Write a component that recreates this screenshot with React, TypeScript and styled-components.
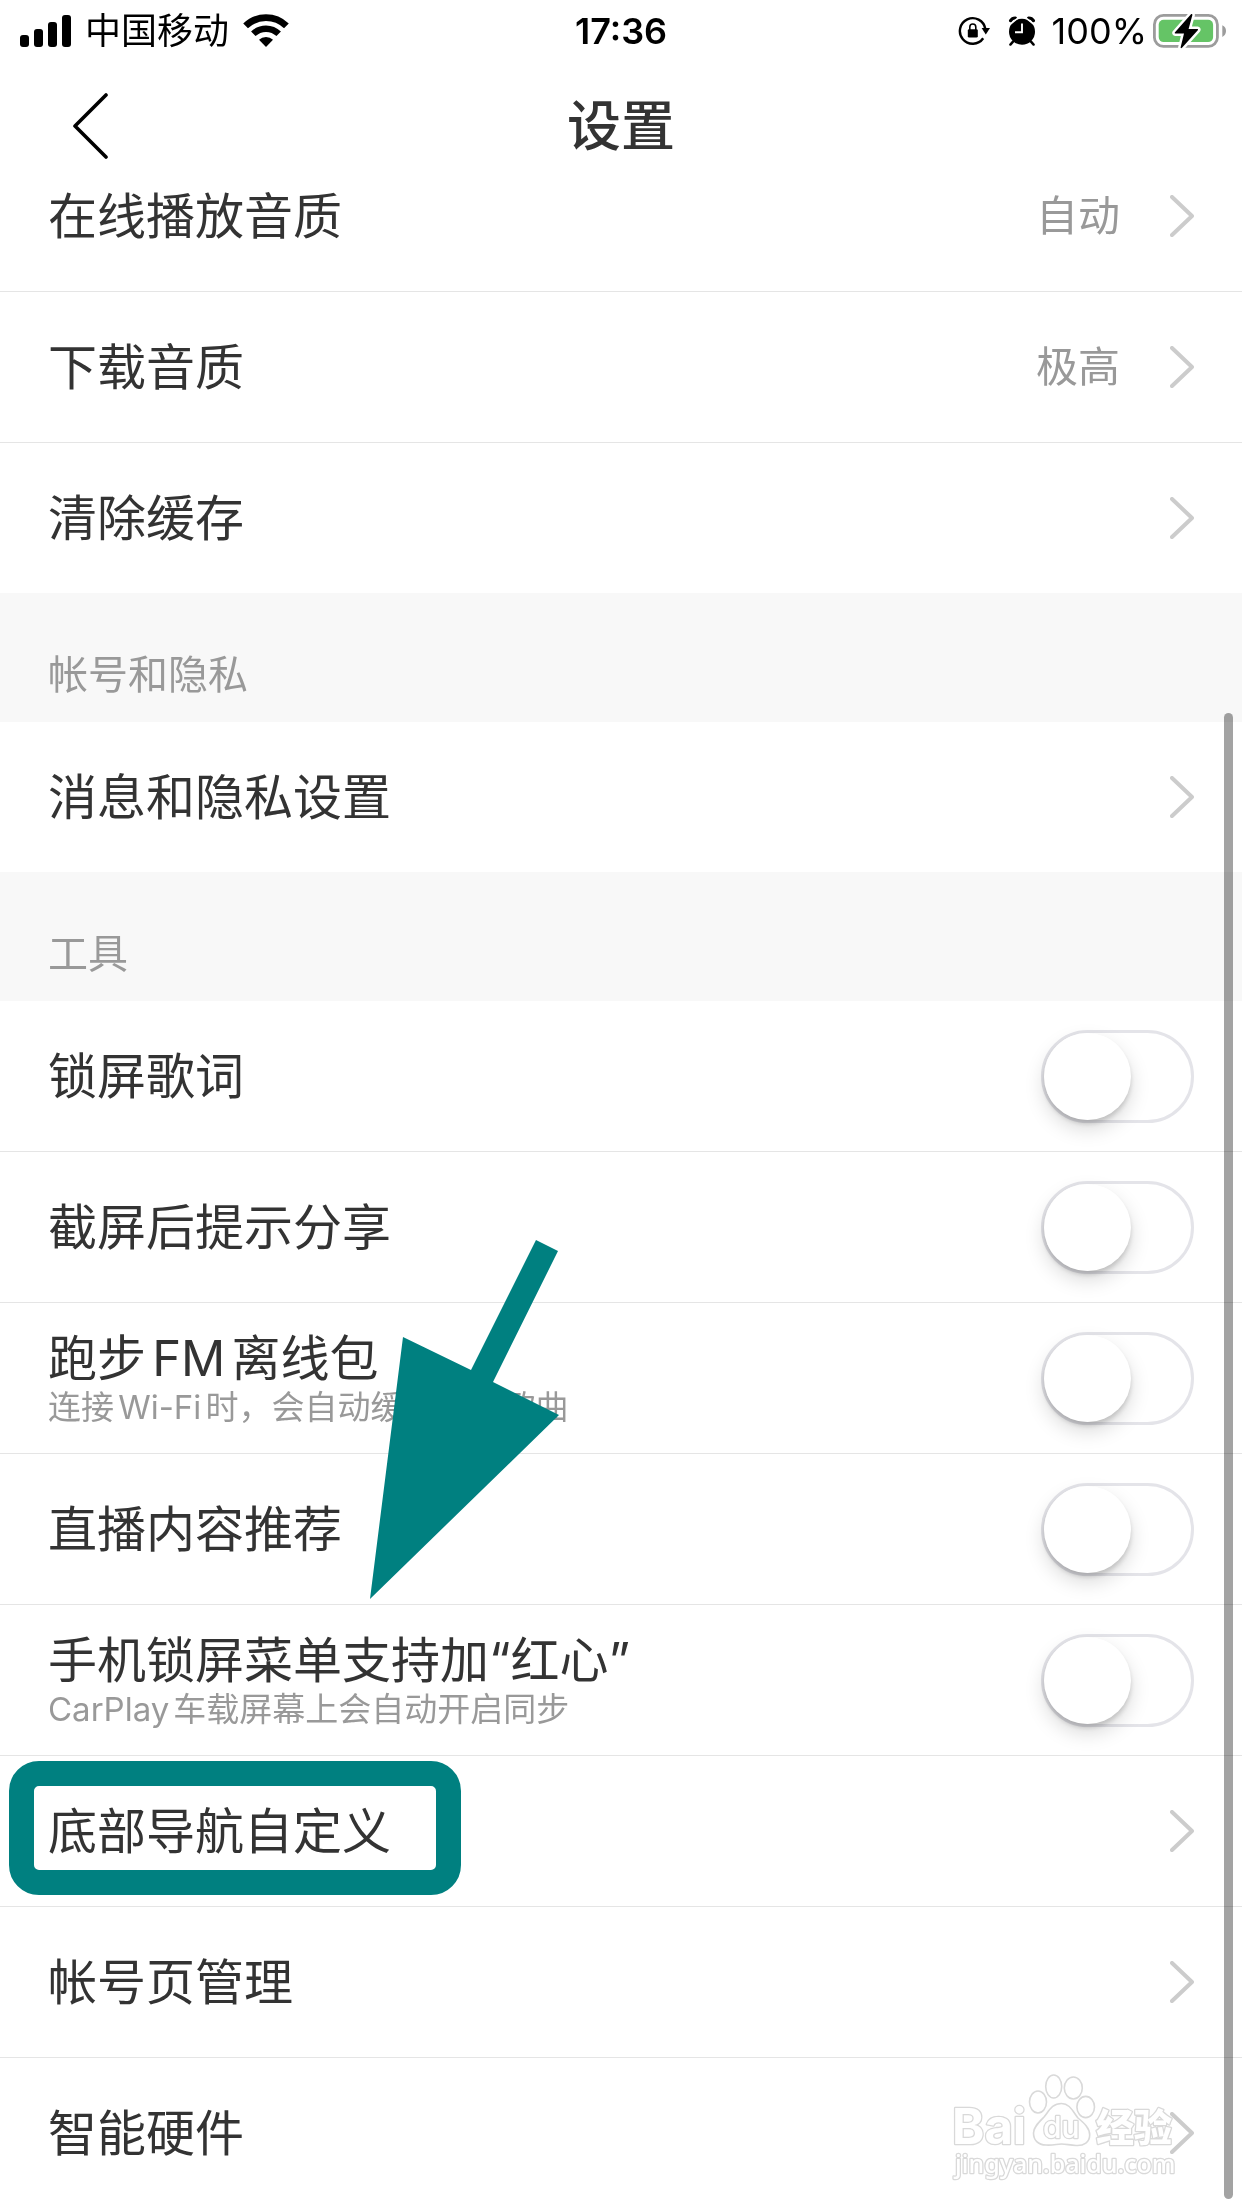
import React from "react";
import styled, { createGlobalStyle, css } from "styled-components";

const GlobalStyle = createGlobalStyle`
  *, *::before, *::after { box-sizing: border-box; }
  body {
    margin: 0;
    background: #fff;
    color: #333;
    font-family: Inter, "Noto Sans CJK SC", sans-serif;
    text-autospace: normal;
  }
  h1, h2 { margin: 0; font-weight: 400; }
  svg { display: block; flex: none; }
`;

const Page = styled.div`
  position: relative;
  overflow-x: clip;
`;

const Header = styled.header`
  position: sticky;
  top: 0;
  z-index: 3;
  background: #fff;
`;

const StatusBar = styled.div`
  display: grid;
  grid-template-columns: 1fr auto 1fr;
  align-items: center;
  height: 60px;
  padding: 0 16px;
  color: #000;
  font-size: 36px;
  line-height: 62px;
`;

const StatusGroup = styled.div<{ $end?: boolean }>`
  display: flex;
  align-items: center;
  justify-content: ${(p) => (p.$end ? "flex-end" : "flex-start")};
  padding-left: 4px;
`;

const Carrier = styled.span`
  margin: 0 14px;
`;

const Clock = styled.time`
  font-weight: 600;
`;

const Percent = styled.span`
  margin: 0 5px 0 16px;
`;

const AlarmSlot = styled.span`
  margin-left: 18px;
`;

const NavBar = styled.nav`
  display: grid;
  grid-template-columns: 1fr auto 1fr;
  align-items: center;
  height: 132px;
  padding: 0 72px;
`;

const BackButton = styled.button`
  justify-self: start;
  padding: 0;
  border: 0;
  background: none;
  color: #000;
  cursor: pointer;
`;

const Title = styled.h1`
  padding-top: 2px;
  font-size: 54px;
  font-weight: 500;
  line-height: 60px;
`;

/* The list is scrolled: its first row sits partly beneath the header. */
const Content = styled.main`
  margin-top: -51px;
`;

const SectionTitle = styled.h2`
  height: 129px;
  padding: 52px 48px 0;
  background: #f8f8f8;
  color: #999;
  font-size: 40px;
  line-height: 60px;
`;

const rowStyle = css`
  position: relative;
  display: flex;
  align-items: center;
  height: 151px;
  padding: 0 48px;
  border-bottom: 1px solid #e5e5e5;
  color: inherit;
  text-decoration: none;
  cursor: pointer;

  &:last-child {
    height: 150px;
    border-bottom: 0;
  }
`;

const LinkRow = styled.a`
  ${rowStyle}
`;

const ToggleRow = styled.label`
  ${rowStyle}
`;

const Texts = styled.span`
  display: flex;
  flex-direction: column;
  flex: 1;
  padding-top: 2px;
`;

const Label = styled.span`
  font-size: 49px;
  line-height: 56px;
`;

const Hint = styled.span`
  color: #999;
  font-size: 33px;
  line-height: 40px;
`;

const Value = styled.span`
  margin-right: 50px;
  color: #999;
  font-size: 42px;
  line-height: 56px;
`;

const Switch = styled.input`
  appearance: none;
  flex: none;
  width: 153px;
  height: 93px;
  margin: 0;
  border: 3px solid #e4e4e9;
  border-radius: 47px;
  background: #fff;
  cursor: pointer;

  &::before {
    content: "";
    display: block;
    width: 87px;
    height: 87px;
    border-radius: 50%;
    background: #fff;
    box-shadow: 0 9px 20px rgba(0, 0, 0, 0.15), 0 4px 4px rgba(0, 0, 0, 0.14);
  }

  &:checked {
    border-color: #31c27c;
    background: #31c27c;
  }

  &:checked::before {
    margin-left: 60px;
  }
`;

const Marker = styled.span`
  position: absolute;
  top: 5px;
  left: 9px;
  width: 452px;
  height: 134px;
  border: 25px solid #008080;
  border-radius: 30px;
  pointer-events: none;
`;

const Pointer = styled.svg`
  position: absolute;
  z-index: 1;
  left: 370px;
  bottom: 306px;
  pointer-events: none;
`;

const ScrollThumb = styled.div`
  position: absolute;
  z-index: 2;
  top: 713px;
  right: 9px;
  bottom: 9px;
  width: 9px;
  border-radius: 5px;
  background: rgba(0, 0, 0, 0.36);
`;

const Watermark = styled.svg`
  position: absolute;
  right: 50px;
  bottom: 24px;
  mix-blend-mode: multiply;
  pointer-events: none;
`;

const SignalIcon = () => (
  <svg width="51" height="32" viewBox="0 0 51 32" aria-hidden="true">
    <rect x="0" y="20" width="9" height="12" rx="3" />
    <rect x="14" y="14" width="9" height="18" rx="3" />
    <rect x="28" y="7" width="9" height="25" rx="3" />
    <rect x="42" y="0" width="9" height="32" rx="3" />
  </svg>
);

const WifiIcon = () => (
  <svg width="46" height="34" viewBox="0 0 46 34" aria-hidden="true">
    <g fill="none" stroke="#000">
      <path d="M2.6 11.9A29.3 29.3 0 0 1 43.4 11.9" strokeWidth="6.8" />
      <path d="M10.3 19.8A18.3 18.3 0 0 1 35.7 19.8" strokeWidth="6.4" />
    </g>
    <path d="M16 25.8A10 10 0 0 1 30 25.8L23 33Z" />
  </svg>
);

const RotationLockIcon = () => (
  <svg width="32" height="30" viewBox="0 0 32 30" aria-hidden="true">
    <path d="M27.3 12.8A12.8 12.8 0 1 0 25.2 22.3" fill="none" stroke="#000" strokeWidth="2.4" />
    <path d="M23.6 12H32L27.8 18.6Z" />
    <rect x="9.8" y="13.2" width="10" height="8.4" rx="1.4" />
    <path d="M11.8 14V11a3 3 0 0 1 6 0v3" fill="none" stroke="#000" strokeWidth="1.6" />
  </svg>
);

const AlarmIcon = () => (
  <svg width="28" height="30" viewBox="0 0 28 30" aria-hidden="true">
    <circle cx="14" cy="15.7" r="13" />
    <path
      d="M2.6 4.6Q4.2 1.9 7.4 2M25.4 4.6Q23.8 1.9 20.6 2"
      fill="none"
      stroke="#000"
      strokeWidth="3.2"
      strokeLinecap="round"
    />
    <path d="M9.2 2.6L1.8 8.6M18.8 2.6L26.2 8.6" stroke="#fff" strokeWidth="1.4" />
    <path d="M5 25.6L2.4 28.6M23 25.6L25.6 28.6" stroke="#000" strokeWidth="2.4" strokeLinecap="round" />
    <path d="M14 7.4V16.3H7" fill="none" stroke="#fff" strokeWidth="1.9" />
  </svg>
);

const BatteryIcon = () => (
  <svg width="74" height="36" viewBox="0 0 74 36" aria-hidden="true">
    <rect x="2.4" y="2.4" width="63" height="31" rx="9" fill="none" stroke="#9c9c9c" strokeWidth="2.8" />
    <path d="M70.3 12.3Q74 14 74 18T70.3 23.9Z" fill="#9c9c9c" />
    <rect x="6.7" y="6.7" width="54.4" height="22.4" rx="5" fill="#65c466" />
    <path
      d="M39.2 1L22.8 19.6Q22.4 20.4 23.4 20.5H32L28.6 34.6Q28.9 35.6 30 34.8L46 17Q46.4 16.1 45.4 16H36.6L40.4 2Q40.4 .5 39.2 1Z"
      stroke="#fff"
      strokeWidth="5"
      strokeLinejoin="round"
      paintOrder="stroke"
    />
  </svg>
);

const BackIcon = () => (
  <svg width="36" height="66" viewBox="0 0 36 66" aria-hidden="true">
    <path
      d="M34 2L3 33L34 64"
      fill="none"
      stroke="currentColor"
      strokeWidth="3.6"
      strokeLinecap="round"
      strokeLinejoin="round"
    />
  </svg>
);

const ChevronIcon = () => (
  <svg width="24" height="42" viewBox="0 0 24 42" aria-hidden="true">
    <path
      d="M2 2L22 21L2 40"
      fill="none"
      stroke="#ccc"
      strokeWidth="4"
      strokeLinecap="round"
      strokeLinejoin="round"
    />
  </svg>
);

const PointerArrow = () => (
  <Pointer width="190" height="360" viewBox="0 0 190 360" aria-hidden="true">
    <path d="M0 359L33 97L101 130L166 0L188 11L123 142L189 175Z" fill="#008080" />
  </Pointer>
);

const BaiduWatermark = () => (
  <Watermark width="240" height="112" viewBox="0 0 240 112" aria-hidden="true">
    <g fill="#fff" stroke="#d9d9d9" strokeWidth="1.6">
      <ellipse cx="86" cy="30" rx="8.5" ry="11" />
      <ellipse cx="101.7" cy="14.5" rx="8" ry="11.5" />
      <ellipse cx="121.3" cy="16" rx="9" ry="11" />
      <ellipse cx="133.7" cy="35" rx="8.8" ry="10.6" />
      <path d="M109.5 31.5C118 31.5 121 40 126 46C132 51 137.700 56 137.700 63C137.700 70 132 74 124 73.500C117 73 114 72 109.500 72C105 72 101 73.500 94 73C86 73 81.500 68 81.500 61C81.500 55 87 50 92 45C97 39 100 31.500 109.500 31.500Z" />
      <g strokeWidth="2.6" paintOrder="stroke" strokeLinejoin="round">
        <text x="0" y="72" fontFamily="Inter, sans-serif" fontSize="49" fontWeight="700">
          Bai
        </text>
        <text x="91" y="66" fontFamily="Inter, sans-serif" fontSize="30" fontWeight="500">
          du
        </text>
        <text x="144" y="69" fontFamily="'Noto Sans CJK SC', sans-serif" fontSize="38" fontWeight="900">
          经验
        </text>
        <text x="3" y="101" fontFamily="'Noto Sans', sans-serif" fontSize="25" fontWeight="500">
          jingyan.baidu.com
        </text>
      </g>
    </g>
  </Watermark>
);

type ItemProps = {
  label: string;
  value?: string;
  hint?: string;
  marked?: boolean;
};

const LinkItem = ({ label, value, marked }: ItemProps) => (
  <LinkRow href="#">
    {marked && (
      <>
        <Marker />
        <PointerArrow />
      </>
    )}
    <Texts>
      <Label>{label}</Label>
    </Texts>
    {value && <Value>{value}</Value>}
    <ChevronIcon />
  </LinkRow>
);

const ToggleItem = ({ label, hint }: ItemProps) => (
  <ToggleRow>
    <Texts>
      <Label>{label}</Label>
      {hint && <Hint>{hint}</Hint>}
    </Texts>
    <Switch type="checkbox" role="switch" />
  </ToggleRow>
);

export default function App() {
  return (
    <Page>
      <GlobalStyle />
      <Header>
        <StatusBar>
          <StatusGroup>
            <SignalIcon />
            <Carrier>中国移动</Carrier>
            <WifiIcon />
          </StatusGroup>
          <Clock>17:36</Clock>
          <StatusGroup $end>
            <RotationLockIcon />
            <AlarmSlot>
              <AlarmIcon />
            </AlarmSlot>
            <Percent>100%</Percent>
            <BatteryIcon />
          </StatusGroup>
        </StatusBar>
        <NavBar>
          <BackButton type="button" aria-label="返回">
            <BackIcon />
          </BackButton>
          <Title>设置</Title>
        </NavBar>
      </Header>

      <Content>
        <section>
          <LinkItem label="在线播放音质" value="自动" />
          <LinkItem label="下载音质" value="极高" />
          <LinkItem label="清除缓存" />
        </section>
        <section>
          <SectionTitle>帐号和隐私</SectionTitle>
          <LinkItem label="消息和隐私设置" />
        </section>
        <section>
          <SectionTitle>工具</SectionTitle>
          <ToggleItem label="锁屏歌词" />
          <ToggleItem label="截屏后提示分享" />
          <ToggleItem label="跑步FM离线包" hint="连接Wi-Fi时，会自动缓存跑步歌曲" />
          <ToggleItem label="直播内容推荐" />
          <ToggleItem label="手机锁屏菜单支持加“红心”" hint="CarPlay车载屏幕上会自动开启同步" />
          <LinkItem label="底部导航自定义" marked />
          <LinkItem label="帐号页管理" />
          <LinkItem label="智能硬件" />
        </section>
      </Content>
      <BaiduWatermark />
      <ScrollThumb />
    </Page>
  );
}
